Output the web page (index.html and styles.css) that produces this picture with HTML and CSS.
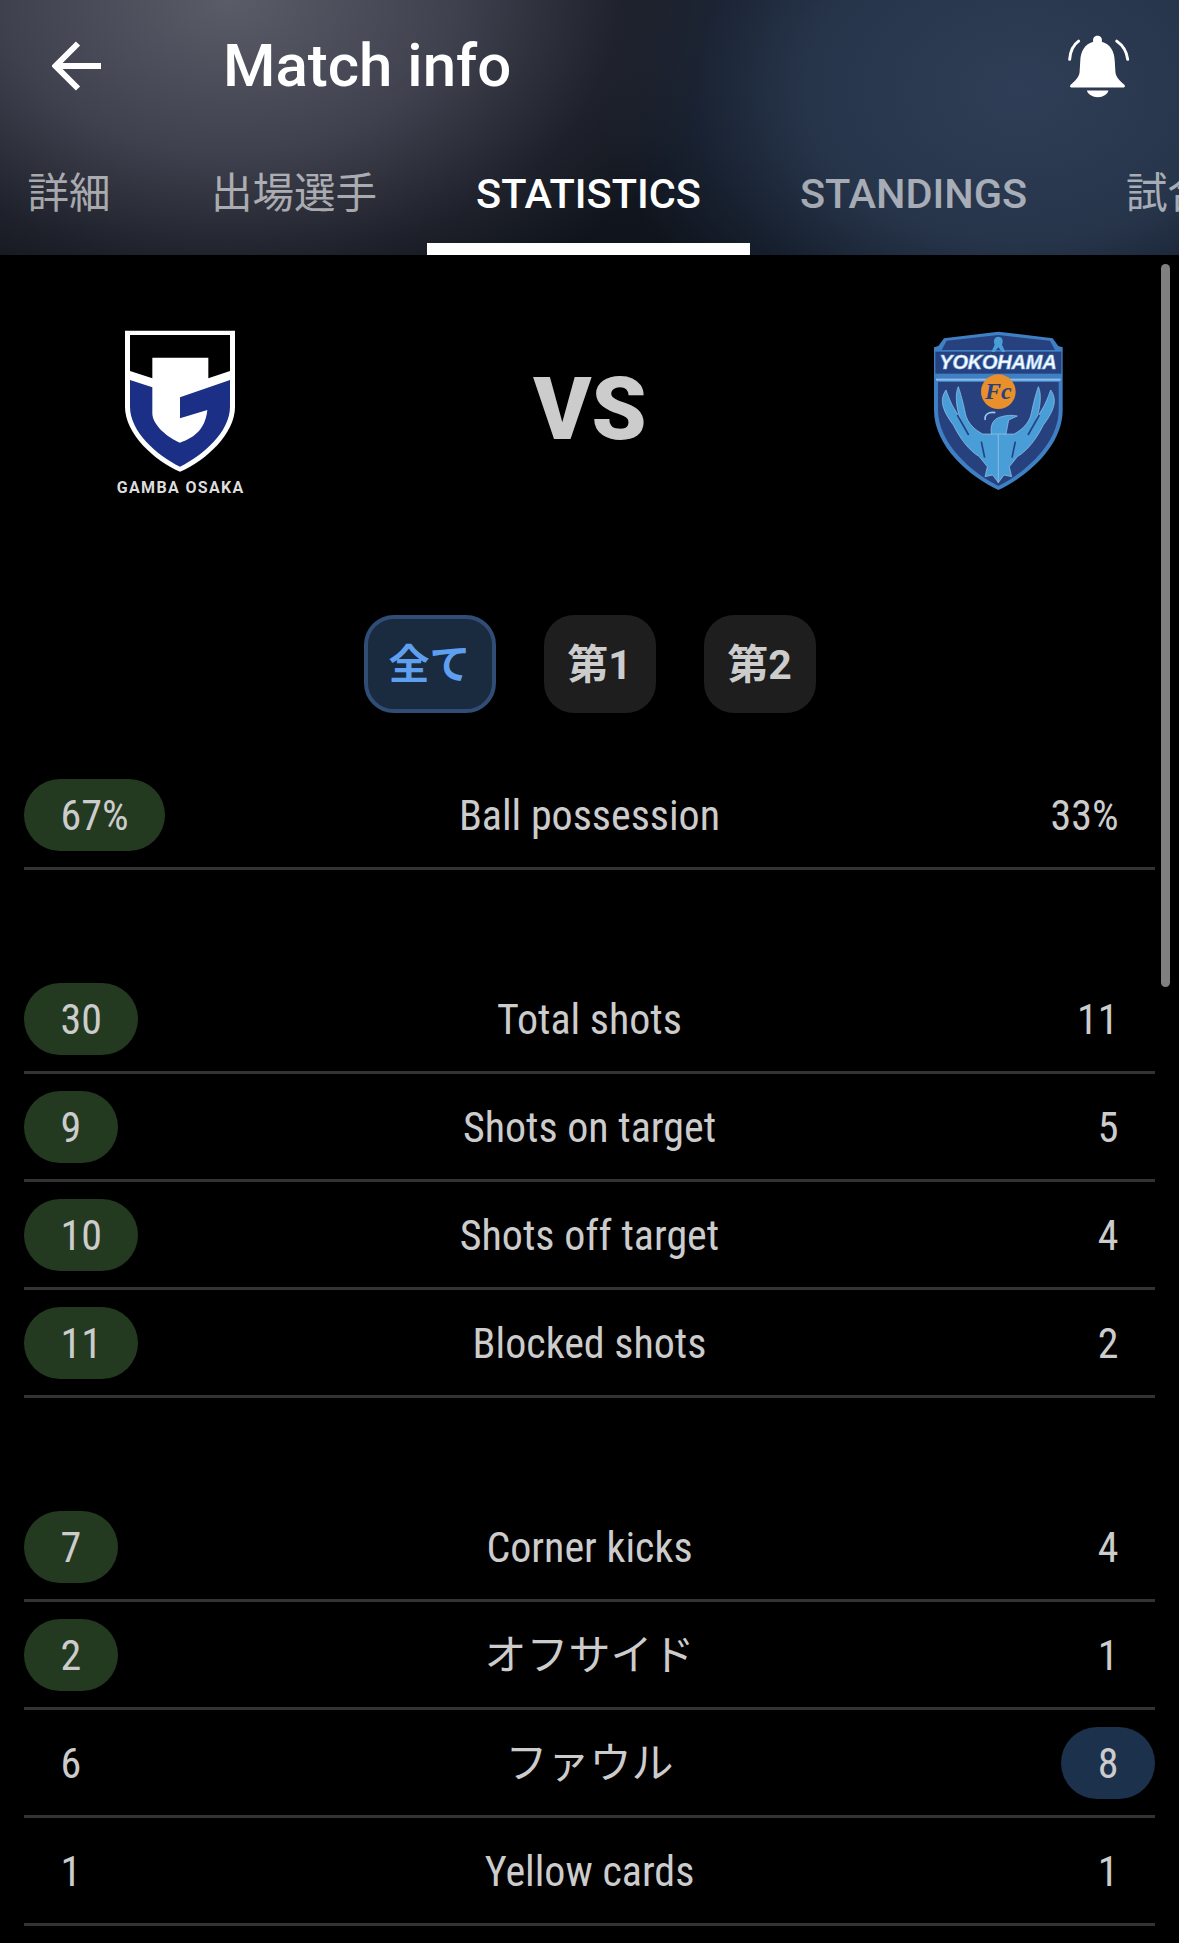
FILE: index.html
```html
<!DOCTYPE html>
<html lang="ja">
<head>
<meta charset="utf-8">
<title>Match info</title>
<link rel="stylesheet" href="styles.css">
</head>
<body>
<div class="app">
  <header class="header">
    <div class="topbar">
      <svg class="back" viewBox="0 0 50 50" width="50" height="50"><path d="M49 25H4M26 2.500 3.500 25 26 47.500" fill="none" stroke="#fff" stroke-width="6"/></svg>
      <h1 class="title">Match info</h1>
      <svg class="bell" viewBox="90 40 190 195" width="63" height="65"><path d="M182 45c-10 0-15 8-13 18-27 8-38 30-39 58l-2 33c-1 14-12 26-26 38-5 5-3 9 3 9h154c6 0 8-4 3-9-14-12-25-24-26-38l-2-33c-1-28-12-50-39-58 2-10-3-18-13-18z" fill="#fff"/><path d="M150 210h65c-3 12-16 20-32 20s-30-8-33-20z" fill="#fff"/><path d="M125 61c-16 11-25 30-27 55M240 61c16 11 30 30 33 55" fill="none" stroke="#fff" stroke-width="9" stroke-linecap="round"/></svg>
    </div>
    <nav class="tabs">
      <span class="tab cjk">詳細</span>
      <span class="tab cjk">出場選手</span>
      <span class="tab active">STATISTICS</span>
      <span class="tab">STANDINGS</span>
      <span class="tab cjk">試合</span>
    </nav>
  </header>
  <main class="content">
    <div class="scrollbar"></div>
    <section class="teams">
      <svg class="crest gamba" viewBox="0 0 540 600" width="180" height="200">
        <path d="M105 62H435V290C435 370 350 450 270 485C190 450 105 370 105 290Z" fill="#fff"/>
        <path d="M120 75H420V183L355 205V143H187V205L120 183Z" fill="#000"/>
        <path d="M120 210L187 232V310C187 345 235 385 270 398C305 385 345 365 352 300L270 325V262L420 210V290C420 365 340 435 270 470C200 435 120 365 120 290Z" fill="#1b2f87"/>
        <text x="80" y="548" textLength="380" class="gamba-text">GAMBA OSAKA</text>
      </svg>
      <div class="vs">VS</div>
      <svg class="crest yoko" viewBox="0 0 510 570" width="170" height="190">
        <path d="M265 65L428 85L445 108L458 112V300C458 410 350 500 265 540C180 500 72 410 72 300V112L85 108L102 85Z" fill="#3f80c4"/>
        <path d="M265 75L420 92L435 120H95L110 92Z" fill="#27417f"/>
        <rect x="76" y="125" width="378" height="66" fill="#27417f"/>
        <text x="88" y="178" textLength="352" class="yoko-text">YOKOHAMA</text>
        <rect x="78" y="206" width="374" height="6" fill="#8fbfe6"/>
        <path d="M84 216H446V300C446 400 345 488 265 528C185 488 84 400 84 300Z" fill="#27417f"/>
        <path d="M265 80c-12 0-16 12-11 24l-10 22h10l11-14 11 14h10l-10-22c5-12 1-24-11-24z" fill="#4a9ed8"/>
        <circle cx="265" cy="245" r="52" fill="#e98f2b"/>
        <text x="265" y="268" class="fc-text">Fc</text>
        <g class="wing">
          <path d="M265 345C252 345 244 356 246 372L218 372C195 360 172 340 166 310C160 280 152 250 145 230C135 250 138 290 150 325L135 300C125 285 115 260 108 240C90 265 92 295 130 345C150 385 175 420 208 440L232 470L225 500L248 495L265 518Z"/>
          <path d="M265 345C278 345 286 356 284 372L312 372C335 360 358 340 364 310C370 280 378 250 385 230C395 250 392 290 380 325L395 300C405 285 415 260 422 240C440 265 438 295 400 345C380 385 355 420 322 440L298 470L305 500L282 495L265 518Z"/>
          <path d="M244 372C240 345 250 328 268 322C285 316 305 314 322 318L296 330L288 372Z"/>
        </g>
        <path d="M226 330c-4-16 10-26 30-22M142 315l34 60M388 315l-34 60M214 395l10 48M316 395l-10 48" fill="none" stroke="#27417f" stroke-width="5"/>
        <path d="M226 330c-4-16 10-26 30-22" fill="none" stroke="#9cc8ea" stroke-width="5"/>
      </svg>
    </section>
    <div class="periods">
      <button class="period selected">全て</button>
      <button class="period">第1</button>
      <button class="period">第2</button>
    </div>
    <section class="group">
      <div class="row"><span class="val"><span class="pill home">67%</span></span><span class="label">Ball possession</span><span class="val right"><span class="pill">33%</span></span></div>
    </section>
    <section class="group">
      <div class="row"><span class="val"><span class="pill home">30</span></span><span class="label">Total shots</span><span class="val right"><span class="pill">11</span></span></div>
      <div class="row"><span class="val"><span class="pill home">9</span></span><span class="label">Shots on target</span><span class="val right"><span class="pill">5</span></span></div>
      <div class="row"><span class="val"><span class="pill home">10</span></span><span class="label">Shots off target</span><span class="val right"><span class="pill">4</span></span></div>
      <div class="row"><span class="val"><span class="pill home">11</span></span><span class="label">Blocked shots</span><span class="val right"><span class="pill">2</span></span></div>
    </section>
    <section class="group">
      <div class="row"><span class="val"><span class="pill home">7</span></span><span class="label">Corner kicks</span><span class="val right"><span class="pill">4</span></span></div>
      <div class="row"><span class="val"><span class="pill home">2</span></span><span class="label jp">オフサイド</span><span class="val right"><span class="pill">1</span></span></div>
      <div class="row"><span class="val"><span class="pill">6</span></span><span class="label jp">ファウル</span><span class="val right"><span class="pill away">8</span></span></div>
      <div class="row"><span class="val"><span class="pill">1</span></span><span class="label">Yellow cards</span><span class="val right"><span class="pill">1</span></span></div>
    </section>
  </main>
</div>
</body>
</html>
```
FILE: styles.css
```css
* { box-sizing: border-box; }
html, body { margin: 0; height: 100%; background: #000; }
body { font-family: Roboto, "Noto Sans CJK JP", sans-serif; color: #ccc; overflow: hidden; }
.app { width: 1179px; height: 1943px; overflow: hidden; }
.header {
  height: 255px;
  overflow: hidden;
  background:
    radial-gradient(ellipse 500px 340px at 230px 0px, #5a5d68 0%, #3f424e 45%, rgba(34,37,47,.75) 78%, rgba(20,25,35,0) 100%),
    radial-gradient(ellipse 420px 300px at 1020px 90px, #2f3e56 0%, #27354b 50%, rgba(30,44,66,.5) 78%, rgba(18,24,36,0) 100%),
    linear-gradient(180deg, #181c27 0%, #0f131b 100%);
}
.topbar { height: 132px; display: flex; align-items: center; padding: 0 49px 0 52px; }
.back { flex: none; }
.title { margin: 0 0 0 121px; flex: 1; font-size: 60px; font-weight: 500; color: #fff; line-height: 1; }
.bell { flex: none; }
.tabs { display: flex; margin-left: -22px; white-space: nowrap; height: 123px; }
.tab { flex: none; padding: 32px 49.500px 0; font-size: 41.500px; font-weight: 500; color: rgba(255,255,255,.6); line-height: 60px; }
.tab:first-child { padding-right: 51px; }
.tab.cjk { font-weight: 400; }
.tab.active { color: #fff; border-bottom: 12px solid #fff; }
.content { position: relative; padding: 0 24px; }
.scrollbar { position: absolute; top: 9px; right: 9px; width: 9px; height: 723px; border-radius: 5px; background: #808080; }
.teams { display: flex; align-items: flex-start; justify-content: space-between; height: 240px; padding: 55px 75px 0 66px; }
.vs { margin-top: 49px; font-size: 88px; font-weight: 900; font-stretch: 90%; color: #ccc; line-height: 100px; }
.crest { flex: none; }
.gamba-text { font-family: Roboto, sans-serif; font-size: 48px; font-weight: 700; fill: #ddd; }
.yoko-text { font-family: "Liberation Sans", sans-serif; font-style: italic; font-weight: 700; font-size: 60px; fill: #fff; stroke: #8fc4ee; stroke-width: 2px; }
.fc-text { font-family: "Liberation Serif", serif; font-style: italic; font-weight: 700; font-size: 72px; fill: #27417f; text-anchor: middle; }
.wing path { fill: #4a9ed8; stroke: #9cc8ea; stroke-width: 2; }
.periods { display: flex; justify-content: center; gap: 48px; margin-top: 120px; }
.period { height: 98px; min-width: 112px; padding: 0 0 6px; border: 0; border-radius: 30px; background: #1e1e1e; color: #ccc; font: 700 41px Roboto, "Noto Sans CJK JP", sans-serif; white-space: nowrap; }
.period.selected { width: 132px; background: #1a2a3f; border: 4px solid #2f4d75; color: #5f9fef; }
.group { margin-top: 49px; }
.group + .group { margin-top: 96px; }
.row { display: grid; grid-template-columns: 1fr auto 1fr; align-items: center; height: 108px; border-bottom: 3px solid #333; font-size: 42px; font-stretch: 75%; }
.val { display: flex; }
.val.right { justify-content: flex-end; }
.pill { display: flex; align-items: center; height: 72px; padding: 2px 36.500px 0; border-radius: 36px; }
.home { background: #233a21; }
.away { background: #1c314c; }
.label { text-align: center; padding-top: 2px; }
.label.jp { font-size: 42px; padding-top: 0; padding-bottom: 6px; }
```
